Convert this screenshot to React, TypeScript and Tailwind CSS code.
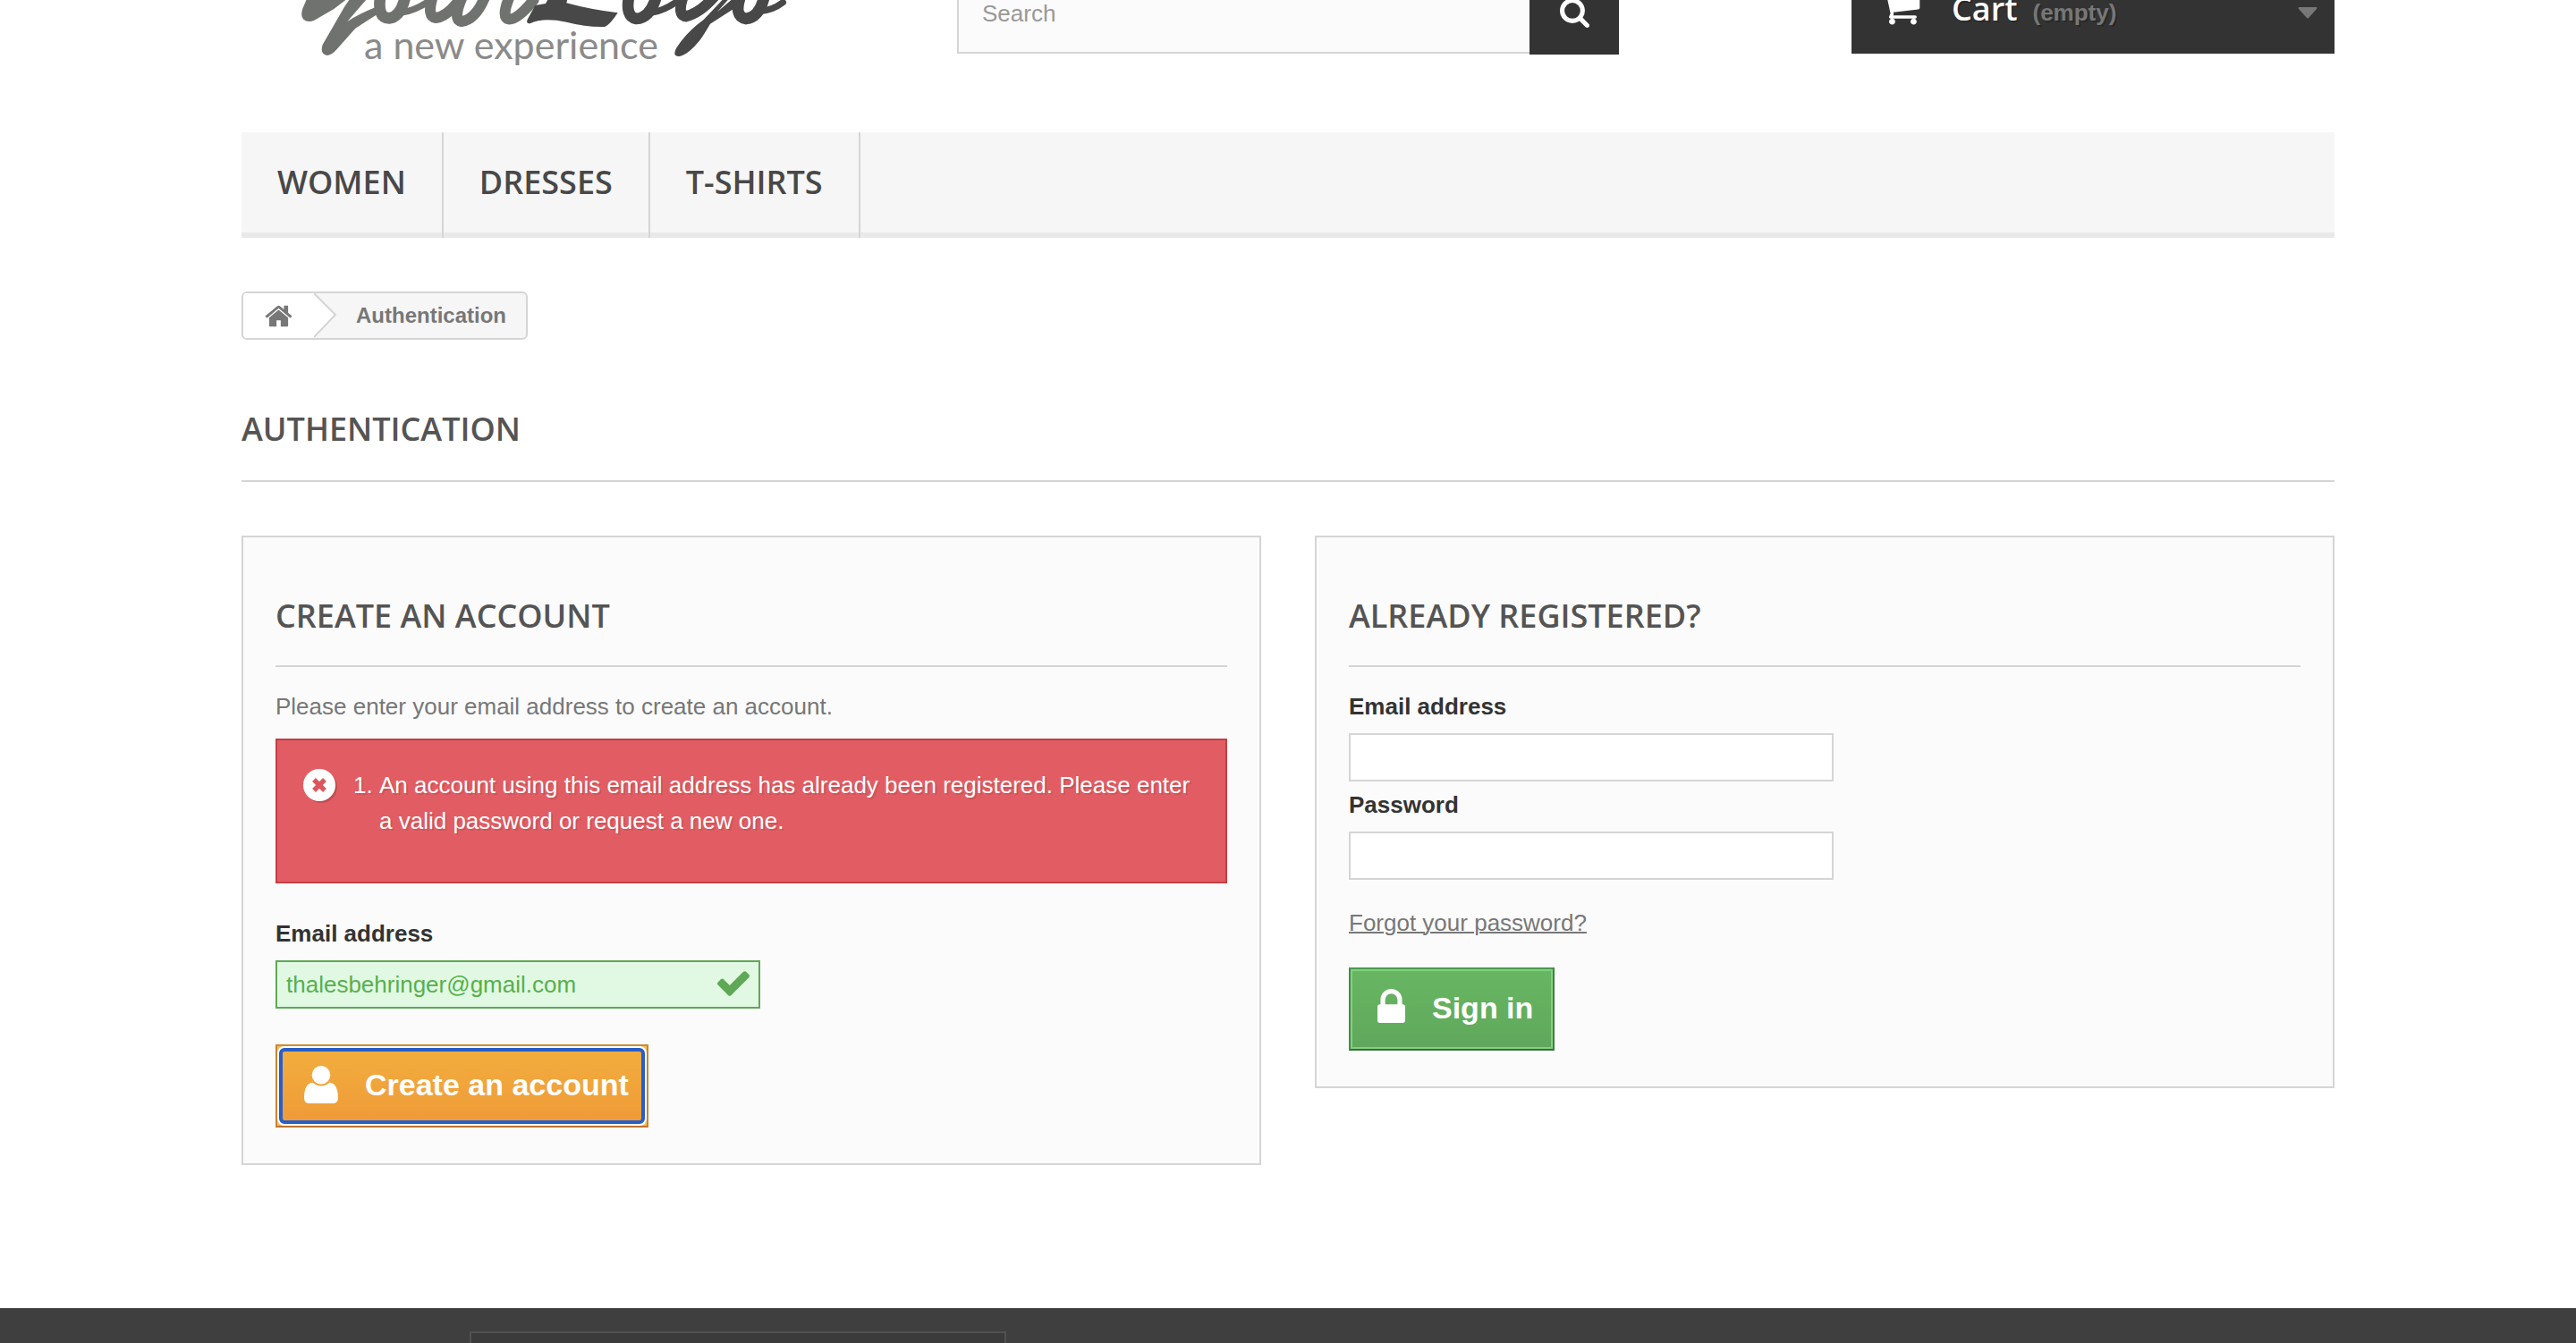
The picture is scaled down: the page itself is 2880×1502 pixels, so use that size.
import React from "react";

const OPEN = "font-['Open_Sans',sans-serif]";

function SearchIcon() {
  return (
    <svg viewBox="64 128 1664 1664" className="h-[33px] w-[33px]" fill="currentColor" aria-hidden="true">
      <path d="M1216 832q0-185-131.5-316.5t-316.5-131.5-316.5 131.5-131.5 316.5 131.5 316.5 316.5 131.5 316.5-131.5 131.5-316.5zm512 832q0 52-38 90t-90 38q-54 0-90-38l-343-342q-179 124-399 124-143 0-273.5-55.5t-225-150-150-225-55.5-273.5 55.5-273.5 150-225 225-150 273.5-55.5 273.5 55.5 225 150 150 225 55.5 273.5q0 220-124 399l343 343q37 37 37 90z" />
    </svg>
  );
}

function CartIcon() {
  return (
    <svg viewBox="0 0 1792 1792" className="mb-[14px] h-[48px] w-[48px]" fill="currentColor" aria-hidden="true">
      <path d="M704 1536q0 52-38 90t-90 38-90-38-38-90 38-90 90-38 90 38 38 90zm896 0q0 52-38 90t-90 38-90-38-38-90 38-90 90-38 90 38 38 90zm128-1088v512q0 24-16.5 42.5t-40.5 21.5l-1044 122q13 60 13 70 0 16-24 64h920q26 0 45 19t19 45-19 45-45 19h-1024q-26 0-45-19t-19-45q0-11 8-31.5t16-36 21.5-40 15.5-29.5l-177-823h-204q-26 0-45-19t-19-45 19-45 45-19h256q16 0 28.5 6.5t19.5 15.5 13 24.5 8 26 5.5 29.5 4.5 26h1201q26 0 45 19t19 45z" />
    </svg>
  );
}

function HomeIcon() {
  return (
    <svg viewBox="0 0 1792 1792" className="h-[33px] w-[33px]" fill="currentColor" aria-hidden="true">
      <path d="M1472 992v480q0 26-19 45t-45 19h-384v-384h-256v384h-384q-26 0-45-19t-19-45v-480q0-1 .5-3t.5-3l575-474 575 474q1 2 1 6zm223-69l-62 74q-8 9-21 11h-3q-13 0-21-7l-692-577-692 577q-12 8-24 7-13-2-21-11l-62-74q-8-10-7-23.5t11-21.5l719-599q32-26 76-26t76 26l244 204v-195q0-14 9-23t23-9h192q14 0 23 9t9 23v408l219 182q10 8 11 21.5t-7 23.5z" />
    </svg>
  );
}

function LockIcon() {
  return (
    <svg viewBox="320 128 1152 1408" className="mb-[7px] h-[38px] w-[31px]" fill="currentColor" aria-hidden="true">
      <path d="M640 768h512v-192q0-106-75-181t-181-75-181 75-75 181v192zm832 96v576q0 40-28 68t-68 28h-960q-40 0-68-28t-28-68v-576q0-40 28-68t68-28h32v-192q0-184 132-316t316-132 316 132 132 316v192h32q40 0 68 28t28 68z" />
    </svg>
  );
}

function UserIcon() {
  return (
    <svg viewBox="0 0 38 42" className="mb-1 h-[42px] w-[38px]" fill="currentColor" aria-hidden="true">
      <circle cx="19" cy="10.3" r="10.3" />
      <path d="M0 36C0 26 3 19.2 9.5 18.8C14.5 23.6 23.5 23.6 28.5 18.8C35 19.2 38 26 38 36C38 39.6 36 42 32.5 42H5.5C2 42 0 39.6 0 36Z" />
    </svg>
  );
}

function ErrorIcon() {
  return (
    <svg viewBox="0 0 36 36" className="mt-[2px] h-[36px] w-[36px] shrink-0 drop-shadow-[2px_2px_0_rgba(0,0,0,0.15)]" aria-hidden="true">
      <circle cx="18" cy="18" r="18" fill="#fff" />
      <path d="M12 12L24 24M24 12L12 24" stroke="#dc575d" strokeWidth="5.4" />
    </svg>
  );
}

function CheckIcon() {
  return (
    <svg viewBox="121 334 1550 1188" className="pointer-events-none absolute top-[12px] right-[12px] h-[28px] w-[36px]" fill="#5fa855" aria-hidden="true">
      <path d="M1671 566q0 40-28 68l-724 724-136 136q-28 28-68 28t-68-28l-136-136-362-362q-28-28-28-68t28-68l136-136q28-28 68-28t68 28l294 295 656-657q28-28 68-28t68 28l136 136q28 28 28 68z" />
    </svg>
  );
}

function Logo() {
  return (
    <svg viewBox="0 0 1860 252" className="h-[84px] w-[620px]" role="img" aria-label="yourLogo, a new experience">
      <g transform="translate(150 0)" fill="#70726f" stroke="none">
        <path d="M72 -10L56 26Q46 52 58 65Q72 78 94 68L160 30L212 -10Z" />
        <path d="M218 -10L196 22L122 150Q112 182 138 186Q154 184 170 165L232 95L305 48L300 24Q245 46 205 72L276 -10Z" />
        <g fill="none" stroke="#70726f" strokeLinecap="round">
          <path d="M316 -14Q304 60 345 61Q384 58 400 -14" strokeWidth="38" />
          <path d="M385 42Q430 38 484 0" strokeWidth="22" />
          <path d="M492 -14Q470 56 502 60Q545 54 590 -14" strokeWidth="36" />
          <path d="M592 -14Q556 68 588 72Q636 66 668 -14" strokeWidth="36" />
          <path d="M750 -14Q720 58 746 64Q775 68 830 0" strokeWidth="36" />
        </g>
      </g>
      <g transform="translate(990 0)" fill="#484848" stroke="none">
        <path d="M-5 18L30 12L42 -10H105L100 10Q180 32 272 43Q245 85 228 90Q170 92 100 74Q20 58 -22 79Q-38 78 -30 64Z" />
        <path d="M632 -10L560 66Q500 110 468 162Q454 190 478 189Q505 186 545 138Q560 118 582 80L694 8V-10H664L606 40L650 -10Z" />
        <g fill="none" stroke="#484848" strokeLinecap="round">
          <path d="M310 -14Q296 56 334 63Q382 60 402 -14" strokeWidth="38" />
          <path d="M385 42Q425 38 478 0" strokeWidth="22" />
          <path d="M492 -14Q470 50 500 55Q548 44 598 -14" strokeWidth="36" />
          <path d="M684 -14Q660 56 702 63Q748 58 764 -14" strokeWidth="38" />
          <path d="M745 38Q790 36 826 8" strokeWidth="22" />
        </g>
      </g>
      <text x="411" y="197" fontSize="129" fill="#8a8a8a" className="font-['Lato',sans-serif]">
        a new experience
      </text>
    </svg>
  );
}

function Heading({ children }: { children: React.ReactNode }) {
  return (
    <h3 className={`${OPEN} mb-[26px] border-b-2 border-[#d6d4d4] pb-[33px] text-[36px] leading-[44px] font-semibold text-[#555454] uppercase`}>
      {children}
    </h3>
  );
}

const labelClass = "mb-3 block leading-9 font-bold text-[#333333]";
const inputClass = "block h-[54px] w-full border-2 px-[10px] outline-none";

export default function App() {
  return (
    <div className="flex min-h-screen flex-col bg-white font-['Liberation_Sans',Arial,sans-serif] text-[26px] text-[#777777]">
      <div className="mx-auto w-full max-w-[2340px]">
        <header className="flex h-[148px] items-start overflow-hidden">
          <a href="#home" className="mr-[180px] block">
            <Logo />
          </a>
          <form className="-mt-8 flex h-[93px] w-[740px]" onSubmit={(e) => e.preventDefault()}>
            <input
              type="search"
              aria-label="Search"
              placeholder="Search"
              className="mb-px min-w-0 flex-1 border-2 border-r-0 border-[#d6d4d4] bg-[#fbfbfb] px-[26px] pt-[2px] outline-none placeholder:text-[#999999]"
            />
            <button type="submit" aria-label="Search" className="flex w-[100px] items-center justify-center bg-[#333333] text-white">
              <SearchIcon />
            </button>
          </form>
          <a
            href="#cart"
            className="-mt-8 ml-auto flex h-[92px] w-[540px] items-center bg-[#333333] pr-[19px] pl-[30px] font-bold text-[#777777] [text-shadow:2px_2px_rgba(0,0,0,0.2)]"
          >
            <span className="text-white">
              <CartIcon />
            </span>
            <span className={`${OPEN} mb-2 ml-[34px] text-[36px] leading-[44px] font-semibold text-white`}>Cart</span>
            <span className="ml-[17px]">(empty)</span>
            <svg viewBox="0 0 22 13" className="ml-auto h-[13px] w-[22px]" fill="#777777" aria-hidden="true">
              <path d="M1 0H21Q22 1 21 2L12 12Q11 13 10 12L1 2Q0 1 1 0Z" />
            </svg>
          </a>
        </header>

        <nav className={`${OPEN} flex bg-[#f6f6f6] text-[36px] leading-[44px] font-semibold text-[#484848] shadow-[inset_0_-6px_0_#e9e9e9]`}>
          {["Women", "Dresses", "T-shirts"].map((name) => (
            <a key={name} href="#category" className="border-r-2 border-[#d6d4d4] px-10 pt-[34px] pb-10 uppercase">
              {name}
            </a>
          ))}
        </nav>

        <div className="mt-[60px] flex">
          <nav aria-label="Breadcrumb" className="flex h-[54px] overflow-hidden rounded-md border-2 border-[#d6d4d4] bg-[#f6f6f6] text-[24px] font-bold">
            <a href="#home" aria-label="Home" className="flex w-[79px] items-center bg-white pl-[23px]">
              <HomeIcon />
            </a>
            <svg viewBox="0 0 26 50" className="h-[50px] w-[26px]" aria-hidden="true">
              <path d="M-1 0H0L24 24L0 49V50H-1Z" fill="#fff" />
              <path d="M0 0L24 24L0 49" fill="none" stroke="#d6d4d4" strokeWidth="2" />
            </svg>
            <span className="flex items-center pr-[22px] pl-[21px]">Authentication</span>
          </nav>
        </div>

        <h1 className={`${OPEN} mt-[78px] mb-[60px] border-b-2 border-[#d6d4d4] pb-[35px] text-[36px] leading-[44px] font-semibold text-[#555454] uppercase`}>
          Authentication
        </h1>

        <main className="grid grid-cols-2 items-start gap-[60px]">
          <form className="border-2 border-[#d6d4d4] bg-[#fbfbfb] px-9 pt-[66px] pb-10" onSubmit={(e) => e.preventDefault()}>
            <Heading>Create an account</Heading>
            <p className="mb-[18px] leading-9">Please enter your email address to create an account.</p>
            <div
              role="alert"
              className="mb-[38px] flex border-2 border-[#c43e44] bg-[#e25d63] pt-[30px] pr-[30px] pb-[48px] pl-[29px] leading-10 text-white [text-shadow:2px_2px_rgba(0,0,0,0.1)]"
            >
              <ErrorIcon />
              <ol className="ml-[49px] list-decimal">
                <li>An account using this email address has already been registered. Please enter a valid password or request a new one.</li>
              </ol>
            </div>
            <label htmlFor="email-create" className={labelClass}>
              Email address
            </label>
            <div className="relative mb-10 w-[542px]">
              <input
                id="email-create"
                type="email"
                defaultValue="thalesbehringer@gmail.com"
                className={`${inputClass} border-[#5fa855] bg-[#e1f9e3] text-[#57b04b]`}
              />
              <CheckIcon />
            </div>
            <button type="submit" className="flex h-[93px] border-2 border-t-[#cf8c30] border-r-[#c98530] border-b-[#bd7130] border-l-[#c98530] bg-[#f6bf62]">
              <span className="flex h-full rounded-lg border-2 border-white bg-white">
                <span className="flex items-center gap-[30px] rounded-md border-4 border-[#295ec8] bg-linear-to-b from-[#f2ad3d] to-[#ef9b38] pr-[14px] pl-6 text-[34px] leading-[42px] font-bold text-white">
                  <UserIcon />
                  <span className="mb-1">Create an account</span>
                </span>
              </span>
            </button>
          </form>

          <form className="border-2 border-[#d6d4d4] bg-[#fbfbfb] px-9 pt-[66px] pb-10" onSubmit={(e) => e.preventDefault()}>
            <Heading>Already registered?</Heading>
            <label htmlFor="email" className={labelClass}>
              Email address
            </label>
            <div className="mb-2 w-[542px]">
              <input id="email" type="email" className={`${inputClass} border-[#d6d4d4] bg-white`} />
            </div>
            <label htmlFor="password" className={labelClass}>
              Password
            </label>
            <div className="mb-[30px] w-[542px]">
              <input id="password" type="password" className={`${inputClass} border-[#d6d4d4] bg-white`} />
            </div>
            <p className="mb-8 leading-9">
              <a href="#forgot" className="underline decoration-2">
                Forgot your password?
              </a>
            </p>
            <button type="submit" className="flex h-[93px] border-2 border-t-[#4b9a50] border-r-[#3f8043] border-b-[#367039] border-l-[#468c4a]">
              <span className="flex h-full items-center gap-[30px] border-2 border-[#83d07f] bg-linear-to-b from-[#67b662] to-[#60a85c] pr-5 pl-7 text-[34px] leading-[42px] font-bold text-white">
                <LockIcon />
                <span className="mb-1">Sign in</span>
              </span>
            </button>
          </form>
        </main>
      </div>

      <footer className="mt-[160px] h-[39px] overflow-hidden bg-[#3f3f3f]">
        <div className="mx-auto flex w-full max-w-[2340px] pt-[26px] pl-[255px]">
          <input type="email" aria-label="Newsletter email" className="h-[90px] w-[600px] border-2 border-[#515151] bg-[#3c3b3b] px-6 outline-none" />
        </div>
      </footer>
    </div>
  );
}
